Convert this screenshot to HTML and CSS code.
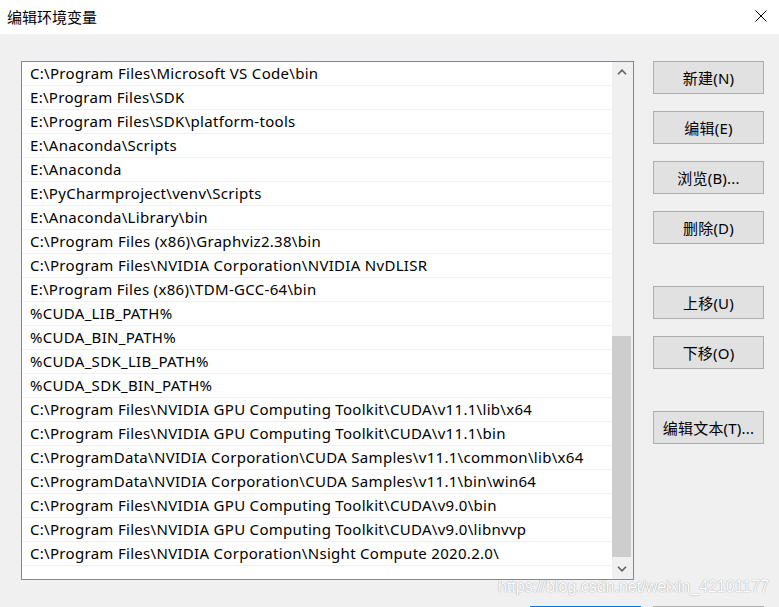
FILE: index.html
```html
<!DOCTYPE html>
<html lang="zh-CN">
<head>
<meta charset="utf-8">
<title>编辑环境变量</title>
<link rel="stylesheet" href="styles.css">
</head>
<body>
<div class="window">
  <div class="titlebar">
    <span class="title">编辑环境变量</span>
    <svg class="close" width="12" height="12" viewBox="0 0 12 12"><path d="M0.5 0.5 L11.5 11.5 M11.5 0.5 L0.5 11.5" stroke="#000" stroke-width="1" fill="none"/></svg>
  </div>
  <div class="main">
    <div class="listbox">
      <ul class="items">
        <li>C:\Program Files\Microsoft VS Code\bin</li>
        <li>E:\Program Files\SDK</li>
        <li>E:\Program Files\SDK\platform-tools</li>
        <li>E:\Anaconda\Scripts</li>
        <li>E:\Anaconda</li>
        <li>E:\PyCharmproject\venv\Scripts</li>
        <li>E:\Anaconda\Library\bin</li>
        <li>C:\Program Files (x86)\Graphviz2.38\bin</li>
        <li>C:\Program Files\NVIDIA Corporation\NVIDIA NvDLISR</li>
        <li>E:\Program Files (x86)\TDM-GCC-64\bin</li>
        <li>%CUDA_LIB_PATH%</li>
        <li>%CUDA_BIN_PATH%</li>
        <li>%CUDA_SDK_LIB_PATH%</li>
        <li>%CUDA_SDK_BIN_PATH%</li>
        <li>C:\Program Files\NVIDIA GPU Computing Toolkit\CUDA\v11.1\lib\x64</li>
        <li>C:\Program Files\NVIDIA GPU Computing Toolkit\CUDA\v11.1\bin</li>
        <li>C:\ProgramData\NVIDIA Corporation\CUDA Samples\v11.1\common\lib\x64</li>
        <li>C:\ProgramData\NVIDIA Corporation\CUDA Samples\v11.1\bin\win64</li>
        <li>C:\Program Files\NVIDIA GPU Computing Toolkit\CUDA\v9.0\bin</li>
        <li>C:\Program Files\NVIDIA GPU Computing Toolkit\CUDA\v9.0\libnvvp</li>
        <li>C:\Program Files\NVIDIA Corporation\Nsight Compute 2020.2.0\</li>
      </ul>
      <div class="scrollbar">
        <div class="sb-btn">
          <svg width="10" height="6" viewBox="0 0 10 6"><path d="M1 5.2 L5 1.2 L9 5.2" stroke="#606060" stroke-width="1.6" fill="none"/></svg>
        </div>
        <div class="sb-track"><div class="sb-thumb"></div></div>
        <div class="sb-btn">
          <svg width="10" height="6" viewBox="0 0 10 6"><path d="M1 0.8 L5 4.8 L9 0.8" stroke="#606060" stroke-width="1.6" fill="none"/></svg>
        </div>
      </div>
    </div>
    <div class="buttons">
      <button class="btn">新建(N)</button>
      <button class="btn">编辑(E)</button>
      <button class="btn">浏览(B)...</button>
      <button class="btn">删除(D)</button>
      <button class="btn group">上移(U)</button>
      <button class="btn">下移(O)</button>
      <button class="btn group">编辑文本(T)...</button>
    </div>
  </div>
  <div class="footer">
    <button class="btn primary" aria-label="确定"></button>
    <button class="btn" aria-label="取消"></button>
  </div>
  <div class="watermark">https://blog.csdn.net/weixin_42101177</div>
</div>
</body>
</html>
```
FILE: styles.css
```css
html, body {
  margin: 0;
  padding: 0;
  height: 100%;
  overflow: hidden;
}
body {
  background: #f0f0f0;
  font-family: "Noto Sans", "Noto Sans CJK SC", sans-serif;
  font-size: 15px;
  color: #000;
}
.window {
  position: relative;
  height: 607px;
  overflow: hidden;
}
.titlebar {
  height: 34px;
  background: #fff;
  display: flex;
  align-items: center;
  justify-content: space-between;
  padding: 0 12px 0 7px;
}
.title {
  font-family: "Noto Sans CJK SC", sans-serif;
  font-size: 15px;
  line-height: 1;
  margin-top: -2px;
}
.close {
  display: block;
  margin-top: -2px;
}
.main {
  display: flex;
  align-items: flex-start;
  padding: 27px 0 0 21px;
  gap: 19px;
}
.listbox {
  width: 613px;
  height: 519px;
  box-sizing: border-box;
  border: 1px solid #828790;
  background: #fff;
  display: flex;
}
.items {
  list-style: none;
  margin: 0;
  padding: 0;
  flex: 1;
}
.items li {
  height: 23px;
  line-height: 23px;
  border-bottom: 1px solid #f0f0f0;
  padding-left: 8px;
  letter-spacing: 0.3px;
  white-space: nowrap;
  overflow: hidden;
}
.scrollbar {
  width: 21px;
  background: #f0f0f0;
  display: flex;
  flex-direction: column;
}
.sb-btn {
  height: 20px;
  display: flex;
  align-items: center;
  justify-content: center;
  padding-right: 1px;
}
.sb-track {
  flex: 1;
}
.sb-thumb {
  margin-top: 254px;
  height: 221px;
  width: 19px;
  background: #cdcdcd;
}
.buttons {
  display: flex;
  flex-direction: column;
  gap: 17px;
  width: 111px;
}
.btn {
  height: 33px;
  width: 111px;
  box-sizing: border-box;
  border: 1px solid #adadad;
  background: #e1e1e1;
  font-family: "Noto Sans", "Noto Sans CJK SC", sans-serif;
  font-size: 15px;
  letter-spacing: 0.2px;
  color: #000;
  padding: 0;
  margin: 0;
}
.btn.group {
  margin-top: 25px;
}
.footer {
  display: flex;
  justify-content: flex-end;
  gap: 12px;
  padding: 26px 15px 0 0;
}
.btn.primary {
  border: 2px solid #0078d7;
}
.watermark {
  position: absolute;
  left: 498px;
  top: 578px;
  font-family: "Liberation Sans", Arial, sans-serif;
  font-size: 16px;
  color: #fff;
  text-shadow: 0 0 1px #a8a8a8, 0 0 1px #a8a8a8;
  white-space: nowrap;
}
```
